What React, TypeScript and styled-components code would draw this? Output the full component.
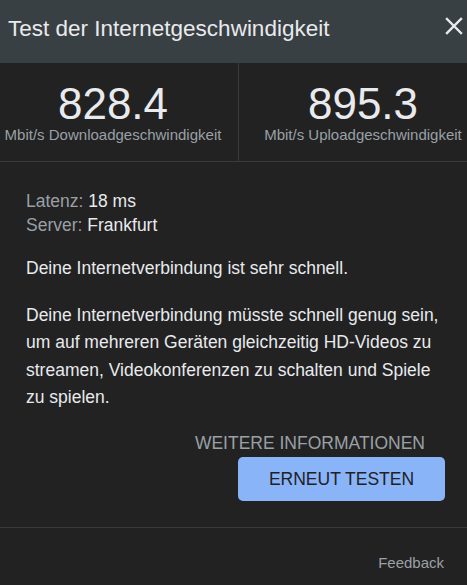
import React from 'react';
import styled, { createGlobalStyle } from 'styled-components';

const GlobalStyle = createGlobalStyle`
  html, body {
    margin: 0;
    padding: 0;
    background: #222222;
  }
  body {
    font-family: "Liberation Sans", Arial, sans-serif;
  }
`;

const Dialog = styled.div`
  width: 467px;
  height: 585px;
  background: #222222;
  display: flex;
  flex-direction: column;
  overflow: hidden;
`;

const Header = styled.header`
  height: 63px;
  flex-shrink: 0;
  background: #394043;
  display: flex;
  align-items: flex-start;
  justify-content: space-between;
  padding: 16px 4px 0 8px;
  box-sizing: border-box;
`;

const Title = styled.h1`
  margin: 0;
  font-size: 22.5px;
  line-height: 26px;
  font-weight: 400;
  color: #e8eaed;
`;

const CloseButton = styled.button`
  background: none;
  border: none;
  padding: 0;
  margin-top: 1px;
  width: 18px;
  height: 18px;
  display: flex;
  cursor: pointer;
`;

const Stats = styled.section`
  height: 98px;
  flex-shrink: 0;
  display: grid;
  grid-template-columns: 238px 1fr;
  border-bottom: 1px solid #3a3a3a;
`;

const Stat = styled.div<{ $side: 'left' | 'right' }>`
  display: flex;
  flex-direction: column;
  align-items: center;
  padding-top: 18.5px;
  padding-left: ${(p) => (p.$side === 'right' ? '20px' : '0')};
  padding-right: ${(p) => (p.$side === 'left' ? '12px' : '0')};
  border-left: ${(p) => (p.$side === 'right' ? '1px solid #3a3a3a' : 'none')};
`;

const Value = styled.div`
  font-size: 44px;
  line-height: 44px;
  color: #e8eaed;
`;

const Unit = styled.div`
  font-size: 15px;
  line-height: 18px;
  color: #9aa0a6;
  white-space: nowrap;
`;

const Body = styled.div`
  padding: 27px 22px 26px 26px;
  display: flex;
  flex-direction: column;
`;

const Meta = styled.div`
  font-size: 17.5px;
  line-height: 24px;
  color: #e8eaed;
`;

const MetaLabel = styled.span`
  color: #9aa0a6;
`;

const Text = styled.p<{ $gap: number }>`
  margin: ${(p) => p.$gap}px 0 0 0;
  font-size: 17.5px;
  line-height: 27.5px;
  color: #e8eaed;
`;

const Actions = styled.div`
  display: flex;
  flex-direction: column;
  align-items: flex-end;
  margin-top: 21.5px;
  gap: 4px;
`;

const LinkButton = styled.button`
  background: none;
  border: none;
  padding: 0;
  margin-right: 20px;
  font-family: inherit;
  font-size: 17.5px;
  line-height: 20px;
  color: #9aa0a6;
  cursor: pointer;
`;

const PrimaryButton = styled.button`
  width: 207px;
  height: 44px;
  background: #8ab4f8;
  border: none;
  border-radius: 5px;
  font-family: inherit;
  font-size: 17.5px;
  color: #202124;
  cursor: pointer;
`;

const Footer = styled.footer`
  flex: 1;
  border-top: 1px solid #3a3a3a;
  display: flex;
  align-items: flex-start;
  justify-content: flex-end;
  padding: 26px 23px 0 0;
`;

const FooterLink = styled.a`
  font-size: 15px;
  line-height: 18px;
  color: #9aa0a6;
  text-decoration: none;
`;

const CloseIcon = () => (
  <svg width="18" height="18" viewBox="0 0 18 18">
    <path d="M2 2 L16 16 M16 2 L2 16" stroke="#e8eaed" strokeWidth="2.4" strokeLinecap="square" />
  </svg>
);

const App: React.FC = () => {
  return (
    <>
      <GlobalStyle />
      <Dialog>
        <Header>
          <Title>Test der Internetgeschwindigkeit</Title>
          <CloseButton aria-label="Schließen">
            <CloseIcon />
          </CloseButton>
        </Header>
        <Stats>
          <Stat $side="left">
            <Value>828.4</Value>
            <Unit>Mbit/s Downloadgeschwindigkeit</Unit>
          </Stat>
          <Stat $side="right">
            <Value>895.3</Value>
            <Unit>Mbit/s Uploadgeschwindigkeit</Unit>
          </Stat>
        </Stats>
        <Body>
          <Meta>
            <div><MetaLabel>Latenz: </MetaLabel>18 ms</div>
            <div><MetaLabel>Server: </MetaLabel>Frankfurt</div>
          </Meta>
          <Text $gap={17.5}>Deine Internetverbindung ist sehr schnell.</Text>
          <Text $gap={19.5}>
            Deine Internetverbindung müsste schnell genug sein, um auf mehreren Geräten gleichzeitig
            HD-Videos zu streamen, Videokonferenzen zu schalten und Spiele zu spielen.
          </Text>
          <Actions>
            <LinkButton>WEITERE INFORMATIONEN</LinkButton>
            <PrimaryButton>ERNEUT TESTEN</PrimaryButton>
          </Actions>
        </Body>
        <Footer>
          <FooterLink href="#">Feedback</FooterLink>
        </Footer>
      </Dialog>
    </>
  );
};

export default App;
